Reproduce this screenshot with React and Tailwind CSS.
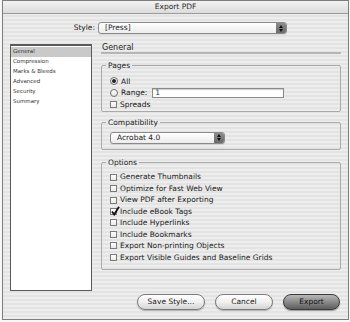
import React from 'react';

const stripes =
  'bg-[repeating-linear-gradient(0deg,#ededed_0px,#ededed_2px,#e3e3e3_2px,#e3e3e3_4px)]';

function Popup({ label, className }) {
  return (
    <div
      className={`flex h-[12px] items-stretch overflow-hidden rounded-[3px] border border-[#8a8a8a] bg-gradient-to-b from-white to-[#ececec] shadow-[0_1px_0_rgba(0,0,0,0.08)] ${className}`}
    >
      <span className="flex flex-1 items-center pl-[6px] text-[7.5px] leading-none text-[#222]">
        {label}
      </span>
      <span className="flex w-[10px] flex-col items-center justify-center gap-[1px] bg-gradient-to-b from-[#8c8c8c] to-[#6a6a6a]">
        <svg width="4" height="3" viewBox="0 0 4 3">
          <path d="M0 3 L2 0 L4 3 Z" fill="#111" />
        </svg>
        <svg width="4" height="3" viewBox="0 0 4 3">
          <path d="M0 0 L2 3 L4 0 Z" fill="#111" />
        </svg>
      </span>
    </div>
  );
}

function Radio({ checked, children }) {
  return (
    <div className="flex h-[11.5px] items-center gap-[3px]">
      <span className="flex h-[8px] w-[8px] items-center justify-center rounded-full border border-[#6e6e6e] bg-gradient-to-b from-white to-[#e4e4e4]">
        {checked && <span className="h-[4px] w-[4px] rounded-full bg-[#222]" />}
      </span>
      {children}
    </div>
  );
}

function Check({ checked, label }) {
  return (
    <div className="flex h-[11.45px] items-center gap-[3px]">
      <span className="relative h-[7px] w-[7px] border border-[#7a7a7a] bg-gradient-to-b from-white to-[#e8e8e8]">
        {checked && (
          <svg
            className="absolute -top-[3px] left-0"
            width="9"
            height="10"
            viewBox="0 0 9 10"
          >
            <path
              d="M1 5.5 L3.2 8.5 L8 0.8"
              fill="none"
              stroke="#111"
              strokeWidth="1.8"
            />
          </svg>
        )}
      </span>
      <span className="text-[7.5px] leading-none text-[#1a1a1a]">{label}</span>
    </div>
  );
}

function Group({ title, className, children }) {
  return (
    <fieldset
      className={`rounded-[2px] border border-[#a9a9a9] px-[8px] ${className}`}
    >
      <legend className="ml-[-4px] px-[2px] text-[7.5px] leading-none text-[#222]">
        {title}
      </legend>
      {children}
    </fieldset>
  );
}

const options = [
  ['Generate Thumbnails', false],
  ['Optimize for Fast Web View', false],
  ['View PDF after Exporting', false],
  ['Include eBook Tags', true],
  ['Include Hyperlinks', false],
  ['Include Bookmarks', false],
  ['Export Non-printing Objects', false],
  ['Export Visible Guides and Baseline Grids', false],
];

const sections = [
  'General',
  'Compression',
  'Marks & Bleeds',
  'Advanced',
  'Security',
  'Summary',
];

export default function App() {
  return (
    <div className="h-[322px] w-[350px] bg-[#f7f7f7] font-['DejaVu_Sans',sans-serif]">
      <div
        className={`ml-[2px] flex h-[320px] w-[347px] flex-col border border-[#7d7d7d] ${stripes}`}
      >
        <div className="flex h-[13px] items-center justify-center border-b border-[#9a9a9a] bg-gradient-to-b from-[#f2f2f2] to-[#dcdcdc] text-[7.5px] leading-none text-[#2a2a2a]">
          Export PDF
        </div>

        <div className="mt-[8px] flex items-center">
          <span className="w-[95px] pr-[3px] text-right text-[7.5px] leading-none text-[#222]">
            Style:
          </span>
          <Popup label="[Press]" className="w-[189px]" />
        </div>

        <div className="mt-[10px] flex pl-[7px]">
          <div className="h-[247px] w-[82px] border border-[#5a5a5a] border-t-2 bg-white pt-[1px]">
            {sections.map((s, i) => (
              <div
                key={s}
                className={`flex h-[10px] items-center pl-[2px] text-[5.5px] leading-none text-[#333] ${
                  i === 0 ? 'bg-[#c9c9c9]' : ''
                }`}
              >
                {s}
              </div>
            ))}
          </div>

          <div className="ml-[9px] flex w-[240px] flex-col">
            <div className="flex h-[10px] items-center border-b-2 border-[#b5b5b5] pl-[1px] text-[8px] leading-none text-[#222]">
              General
            </div>

            <Group title="Pages" className="mt-[8px] h-[50px] pt-[6px]">
              <Radio checked>
                <span className="text-[7.5px] leading-none text-[#111]">All</span>
              </Radio>
              <Radio>
                <span className="text-[7.5px] leading-none text-[#111]">Range:</span>
                <span className="ml-[2px] flex h-[10px] w-[132px] items-center border border-[#8a8a8a] bg-white pl-[2px] text-[7.5px] leading-none text-[#333] shadow-[inset_0_1px_1px_rgba(0,0,0,0.2)]">
                  1
                </span>
              </Radio>
              <div className="flex h-[11.5px] items-center gap-[3px]">
                <span className="h-[7px] w-[7px] border border-[#7a7a7a] bg-gradient-to-b from-white to-[#e8e8e8]" />
                <span className="text-[7.5px] leading-none text-[#111]">Spreads</span>
              </div>
            </Group>

            <Group title="Compatibility" className="mt-[7px] h-[31px] pt-[5px]">
              <Popup label="Acrobat 4.0" className="w-[115px]" />
            </Group>

            <Group title="Options" className="mt-[9px] h-[111px] pt-[5px]">
              {options.map(([label, checked]) => (
                <Check key={label} label={label} checked={checked} />
              ))}
            </Group>
          </div>
        </div>

        <div className="mt-[3px] flex justify-end gap-[10px] pr-[8px]">
          <button
            type="button"
            className="h-[16px] w-[68px] rounded-full border border-[#7a7a7a] bg-gradient-to-b from-white via-[#f0f0f0] to-[#d4d4d4] text-[7.5px] leading-none text-[#222] shadow-[0_1px_1px_rgba(0,0,0,0.25)]"
          >
            Save Style...
          </button>
          <button
            type="button"
            className="h-[16px] w-[58px] rounded-full border border-[#7a7a7a] bg-gradient-to-b from-white via-[#f0f0f0] to-[#d4d4d4] text-[7.5px] leading-none text-[#222] shadow-[0_1px_1px_rgba(0,0,0,0.25)]"
          >
            Cancel
          </button>
          <button
            type="button"
            className="h-[16px] w-[57px] rounded-full border border-[#3a3a3a] bg-gradient-to-b from-[#b8b8b8] via-[#8a8a8a] to-[#5e5e5e] text-[7.5px] leading-none text-[#111] shadow-[0_1px_1px_rgba(0,0,0,0.35)]"
          >
            Export
          </button>
        </div>
      </div>
    </div>
  );
}
